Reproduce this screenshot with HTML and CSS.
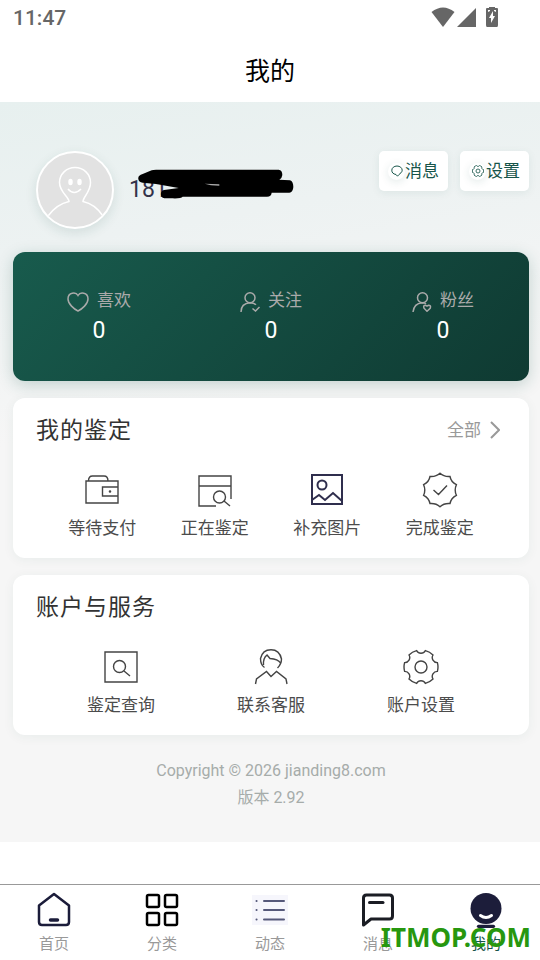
FILE: index.html
```html
<!DOCTYPE html>
<html lang="zh-CN">
<head>
<meta charset="utf-8">
<meta name="viewport" content="width=device-width, initial-scale=1">
<title>我的</title>
<link rel="stylesheet" href="styles.css">
</head>
<body>
<div class="status">
  <span>11:47</span>
  <div class="status-icons">
    <svg width="24" height="20" viewBox="0 0 24 20" fill="#666"><path d="M12 20 .5 5Q12-4 23.500 5Z"/></svg>
    <svg width="19" height="19" viewBox="0 0 19 19" fill="#666"><path d="M19 0v19H0z"/></svg>
    <svg class="battery" width="12" height="20" viewBox="0 0 12 20"><path fill="#666" d="M3 0h6v1h2q1 0 1 1v16q0 2-1 2H1q-1 0-1-2V2q0-1 1-1h2z"/><path fill="#fff" d="M7 4v5h2l-4 7v-5H3zM2 3h2v1L2 5zM8 3h2v2L8 4z"/></svg>
  </div>
</div>
<header class="header"><h1>我的</h1></header>
<main class="main">
  <section class="profile">
    <svg class="avatar" viewBox="0 0 74 74" fill="none" stroke="#fff" stroke-width="1.500"><path d="M10 63Q19 51 31 48.500C31 44 21.500 39 21.500 29.500a15 14.500 0 0 1 31 0C52.500 39 45 44 45 48.500Q57 51 65 63"/><path d="M30 36q6 7 13 0"/><ellipse cx="32.500" cy="29" rx="1.500" ry="2.500" fill="#fff"/><ellipse cx="41.500" cy="29" rx="1.500" ry="2.500" fill="#fff"/></svg>
    <div class="name">181<svg class="scribble" width="158" height="30" viewBox="350 85 474 90"><path d="M357 115Q355 104 370 100L397 89Q401 87 410 87H778Q789 88 789 103 788 113 780 117L812 119Q822 122 822 139 821 155 810 156H757Q756 168 743 168H490Q485 174 460 173H435Q423 170 425 157 427 147 440 147L478 142 410 130 370 126Q358 125 357 115Z"/><path fill="#aaa" d="m556 129 44 2v4l-25-1z"/></svg></div>
    <div class="actions">
      <button type="button"><span class="dot"><svg width="12" height="12" viewBox="0 0 12 12" fill="none" stroke="#17554a"><path d="M5 9.500C2 9 .8 7.500.8 5.200.8 3 3 1 6 1s5.200 2 5.200 4.200S9 8.500 8 9.500l-1.500 1.700z"/></svg></span>消息</button>
      <button type="button"><span class="dot"><svg width="12" height="12" viewBox="-18 -18 36 36" fill="none" stroke="#17554a" stroke-width="2.500"><path d="M16.400-4.400A17 17 0 0 1 16.400 4.400 5 5 0 0 0 12 12 17 17 0 0 1 4.400 16.400 5 5 0 0 0-4.400 16.400 17 17 0 0 1-12 12 5 5 0 0 0-16.400 4.400 17 17 0 0 1-16.400-4.400 5 5 0 0 0-12-12 17 17 0 0 1-4.400-16.400 5 5 0 0 0 4.400-16.400 17 17 0 0 1 12-12 5 5 0 0 0 16.400-4.400Z"/><circle r="6"/></svg></span>设置</button>
    </div>
  </section>
  <section class="stats">
    <a href="#likes"><span class="stat-label"><svg width="22" height="20" viewBox="0 0 22 20"><path d="M11 3.500C9-.2 1 0 1 7c0 5 6 10 10 12 4-2 10-7 10-12 0-7-8-7.200-10-3.500Z"/></svg>喜欢</span><strong>0</strong></a>
    <a href="#following"><span class="stat-label"><svg width="20" height="20" viewBox="0 0 20 20"><circle cx="10" cy="5.800" r="5"/><path d="M1 20q0-8.500 9-9.200 4 0 6 2M12.500 16.500l3 2.500 4-4"/></svg>关注</span><strong>0</strong></a>
    <a href="#fans"><span class="stat-label"><svg width="20" height="20" viewBox="0 0 20 20"><circle cx="10.500" cy="5.800" r="5"/><path d="M1 20q1-8.500 9-9.200 3 0 4 1M15 19.200l-3-3q-1-3 1.500-3l1.500 1 1.500-1q2.800 0 1.700 3z"/></svg>粉丝</span><strong>0</strong></a>
  </section>
  <section class="card">
    <div class="card-head"><h2>我的鉴定</h2><a class="all" href="#all">全部<svg width="10" height="18" viewBox="0 0 10 18"><path d="m1 1 8 8-8 8"/></svg></a></div>
    <div class="links">
      <a href="#pay"><svg viewBox="0 0 36 36"><path d="M2 9h32v22H2zM4.500 9q0-5 4-5H20q4 0 4 5M34 15H18.500v9H34"/><circle cx="26" cy="19.500" r=".6"/></svg>等待支付</a>
      <a href="#active"><svg viewBox="0 0 36 36"><path d="M19 34H2V4h32v23M2 14h32"/><circle cx="22.500" cy="25" r="6"/><path d="m27 29 6 5"/></svg>正在鉴定</a>
      <a href="#images"><svg class="navy" viewBox="0 0 36 36"><path d="M3 3h30v29H3zM3 28l7-5 6 5 8-7 9 8"/><circle cx="13" cy="13" r="4.500"/></svg>补充图片</a>
      <a href="#done"><svg viewBox="-18 -18 36 36"><path d="M0-16.700Q4-13 10-13.500 11-8 16.400-5.300 14 0 16.400 5.300 11 8 10 13.500 4 13 0 16.700-4 13-10 13.500-11 8-16.400 5.300-14 0-16.400-5.300-11-8-10-13.500-4-13 0-16.700ZM-6.500 0l5 4.500 8.500-9"/></svg>完成鉴定</a>
    </div>
  </section>
  <section class="card">
    <div class="card-head"><h2>账户与服务</h2></div>
    <div class="links">
      <a href="#search"><svg viewBox="0 0 36 36"><path d="M2 3h32v30H2zM21 22l6 5"/><circle cx="16.500" cy="17.500" r="6"/></svg>鉴定查询</a>
      <a href="#support"><svg viewBox="0 0 36 36"><path d="M11.500 18.500Q7.500 16 7.500 9.500 9.500.700 18 .700T28.500 10q0 5-4 9M27.500 14Q25 10 17 9.500L14 6q-4 3-3.500 10M2.500 35l1-5 10-7.500 4.500 5 5.500-5 9.500 7.500 1 5"/></svg>联系客服</a>
      <a href="#settings"><svg viewBox="-18 -18 36 36"><path d="M16.400-4.400A17 17 0 0 1 16.400 4.400 5 5 0 0 0 12 12 17 17 0 0 1 4.400 16.400 5 5 0 0 0-4.400 16.400 17 17 0 0 1-12 12 5 5 0 0 0-16.400 4.400 17 17 0 0 1-16.400-4.400 5 5 0 0 0-12-12 17 17 0 0 1-4.400-16.400 5 5 0 0 0 4.400-16.400 17 17 0 0 1 12-12 5 5 0 0 0 16.400-4.400Z"/><circle r="6"/></svg>账户设置</a>
    </div>
  </section>
  <footer class="footer"><p>Copyright © 2026 jianding8.com</p><p>版本 2.92</p></footer>
</main>
<nav class="tabs">
  <a href="#home"><svg viewBox="0 0 36 36" fill="none" stroke="#1b1c3a" stroke-width="2.500" stroke-linejoin="round" stroke-linecap="round"><path d="M3 13.500 18 2l15 11.500V30q0 3-3 3H6q-3 0-3-3z"/><path stroke-width="3.500" d="M14.500 28h7"/></svg>首页</a>
  <a href="#category"><svg viewBox="0 0 36 36" fill="none" stroke="#000" stroke-width="2.500"><rect x="3" y="3" width="12" height="12" rx="1.500"/><rect x="21" y="3" width="12" height="12" rx="1.500"/><rect x="3" y="21" width="12" height="12" rx="1.500"/><rect x="21" y="21" width="12" height="12" rx="1.500"/></svg>分类</a>
  <a href="#feed"><svg viewBox="0 0 36 36" fill="none" stroke="#56597a" stroke-width="2" stroke-linecap="round"><path fill="#f6f6fc" stroke="none" d="M0 3h36v30H0z"/><path d="M12 9h20M12 18h20M12 27.500h20M4.500 9h.1M4.500 18h.1M4.500 27.500h.1"/></svg>动态</a>
  <a href="#messages"><svg viewBox="0 0 36 36" fill="none" stroke="#1b1d24" stroke-width="3" stroke-linejoin="round" stroke-linecap="round"><path d="M3.500 33V6q0-3 3-3h23q3 0 3 3v18q0 3-3 3H11z"/><path d="M9.500 10.500H23"/></svg>消息</a>
  <a class="active" href="#me"><svg viewBox="0 0 36 36"><circle cx="18" cy="16.500" r="15.500" fill="#1c1d3a"/><path d="M12.500 23.500q5.500 4 11 0" fill="none" stroke="#fff" stroke-width="3" stroke-linecap="round"/><path d="M10.500 34.300h15" stroke="#1c1d3a" stroke-width="3.200" stroke-linecap="round"/></svg>我的</a>
  <div class="watermark">ITMOP.COM</div>
</nav>
</body>
</html>
```
FILE: styles.css
```css
* { box-sizing: border-box; }
body {
  margin: 0;
  min-height: 100vh;
  display: flex;
  flex-direction: column;
  background: #fff;
  color: #444;
  font-family: Roboto, "Noto Sans CJK SC", sans-serif;
}
h1, h2, p { margin: 0; font-weight: 400; }
a { color: inherit; text-decoration: none; }
svg { display: block; flex: none; }

.status {
  height: 36px;
  padding: 0 42px 0 13px;
  display: flex;
  align-items: center;
  justify-content: space-between;
  color: #666;
  font-size: 21px;
  font-weight: 500;
}
.status-icons { display: flex; align-items: flex-end; gap: 2px; padding-bottom: 2px; }
.battery { margin-left: 8px; }

.header {
  height: 66px;
  padding-top: 6px;
  display: flex;
  align-items: center;
  justify-content: center;
}
.header h1 { color: #000; font-size: 25px; line-height: 36px; }

.main {
  padding: 0 11px 0 13px;
  background: linear-gradient(170deg, #e7f0ef 0, #edf2f2 150px, #f6f6f6 340px);
}
.profile {
  height: 150px;
  padding: 49px 0 0 23px;
  display: flex;
  align-items: flex-start;
}
.avatar {
  width: 78px;
  height: 78px;
  border: 2px solid #fff;
  border-radius: 50%;
  background: #e2e2e2;
  box-shadow: 0 4px 12px rgba(23, 85, 74, .12);
}
.name {
  position: relative;
  margin-left: 15px;
  color: #33334a;
  font-size: 23px;
  line-height: 78px;
}
.scribble { position: absolute; left: 7px; top: 18px; }
.actions { margin-left: auto; display: flex; gap: 12px; }
.actions button {
  width: 69px;
  height: 40px;
  padding: 0 0 4px;
  display: flex;
  align-items: center;
  justify-content: center;
  border: 0;
  border-radius: 5px;
  background: #fff;
  box-shadow: 0 2px 8px rgba(23, 85, 74, .08);
  color: #17554a;
  font: inherit;
  font-size: 17px;
}
.dot {
  width: 17px;
  height: 17px;
  margin-top: 4px;
  display: grid;
  place-items: center;
  border-radius: 50%;
  box-shadow: 0 2px 8px rgba(23, 85, 74, .12);
}

.stats {
  height: 129px;
  display: flex;
  padding-top: 36px;
  border-radius: 12px;
  background: linear-gradient(135deg, #185b4d, #0f3a32);
  box-shadow: 0 4px 16px rgba(23, 85, 74, .22);
  color: #fff;
}
.stats a {
  flex: 1;
  display: flex;
  flex-direction: column;
  align-items: center;
}
.stat-label {
  display: flex;
  align-items: center;
  gap: 8px;
  color: #aaa;
  font-size: 17px;
  line-height: 24px;
}
.stat-label svg { fill: none; stroke: #aaa; stroke-width: 1.5; margin-top: 3px; }
.stats strong { font-size: 23px; line-height: 38px; font-weight: 400; }

.card {
  margin-top: 17px;
  padding-bottom: 18px;
  border-radius: 12px;
  background: #fff;
  box-shadow: 0 2px 12px rgba(23, 85, 74, .06);
}
.card-head {
  height: 64px;
  padding: 0 29px 4px 23px;
  display: flex;
  align-items: center;
  justify-content: space-between;
}
.card-head h2 { color: #333; font-size: 23px; letter-spacing: 1px; }
.all {
  display: flex;
  align-items: center;
  gap: 9px;
  color: #999;
  font-size: 17px;
}
.all svg { fill: none; stroke: #999; stroke-width: 2; margin-top: 3px; }
.links { display: flex; padding: 10px 33px 0; }
.links a {
  flex: 1;
  display: flex;
  flex-direction: column;
  align-items: center;
  gap: 8px;
  color: #4c4c4c;
  font-size: 17px;
  line-height: 24px;
}
.links svg { width: 36px; height: 36px; fill: none; stroke: #444; stroke-width: 1.4; }
.links .navy { stroke: #2f2e4d; stroke-width: 2; }
.footer {
  padding: 22px 0 31px;
  color: #a6acaa;
  font-size: 16px;
  line-height: 27px;
  text-align: center;
}

.tabs {
  position: relative;
  height: 76px;
  margin-top: auto;
  padding-top: 7px;
  display: flex;
  border-top: 1px solid #999;
  background: #fff;
  color: #999;
  font-size: 15px;
  line-height: 24px;
}
.tabs a {
  flex: 1;
  display: flex;
  flex-direction: column;
  align-items: center;
  gap: 4px;
}
.tabs svg { width: 36px; height: 36px; }
.tabs .active { color: #17554a; }
.watermark {
  position: absolute;
  right: 9px;
  bottom: 5px;
  color: #27970f;
  font: bold 26px/36px "Noto Sans", sans-serif;
}
```
